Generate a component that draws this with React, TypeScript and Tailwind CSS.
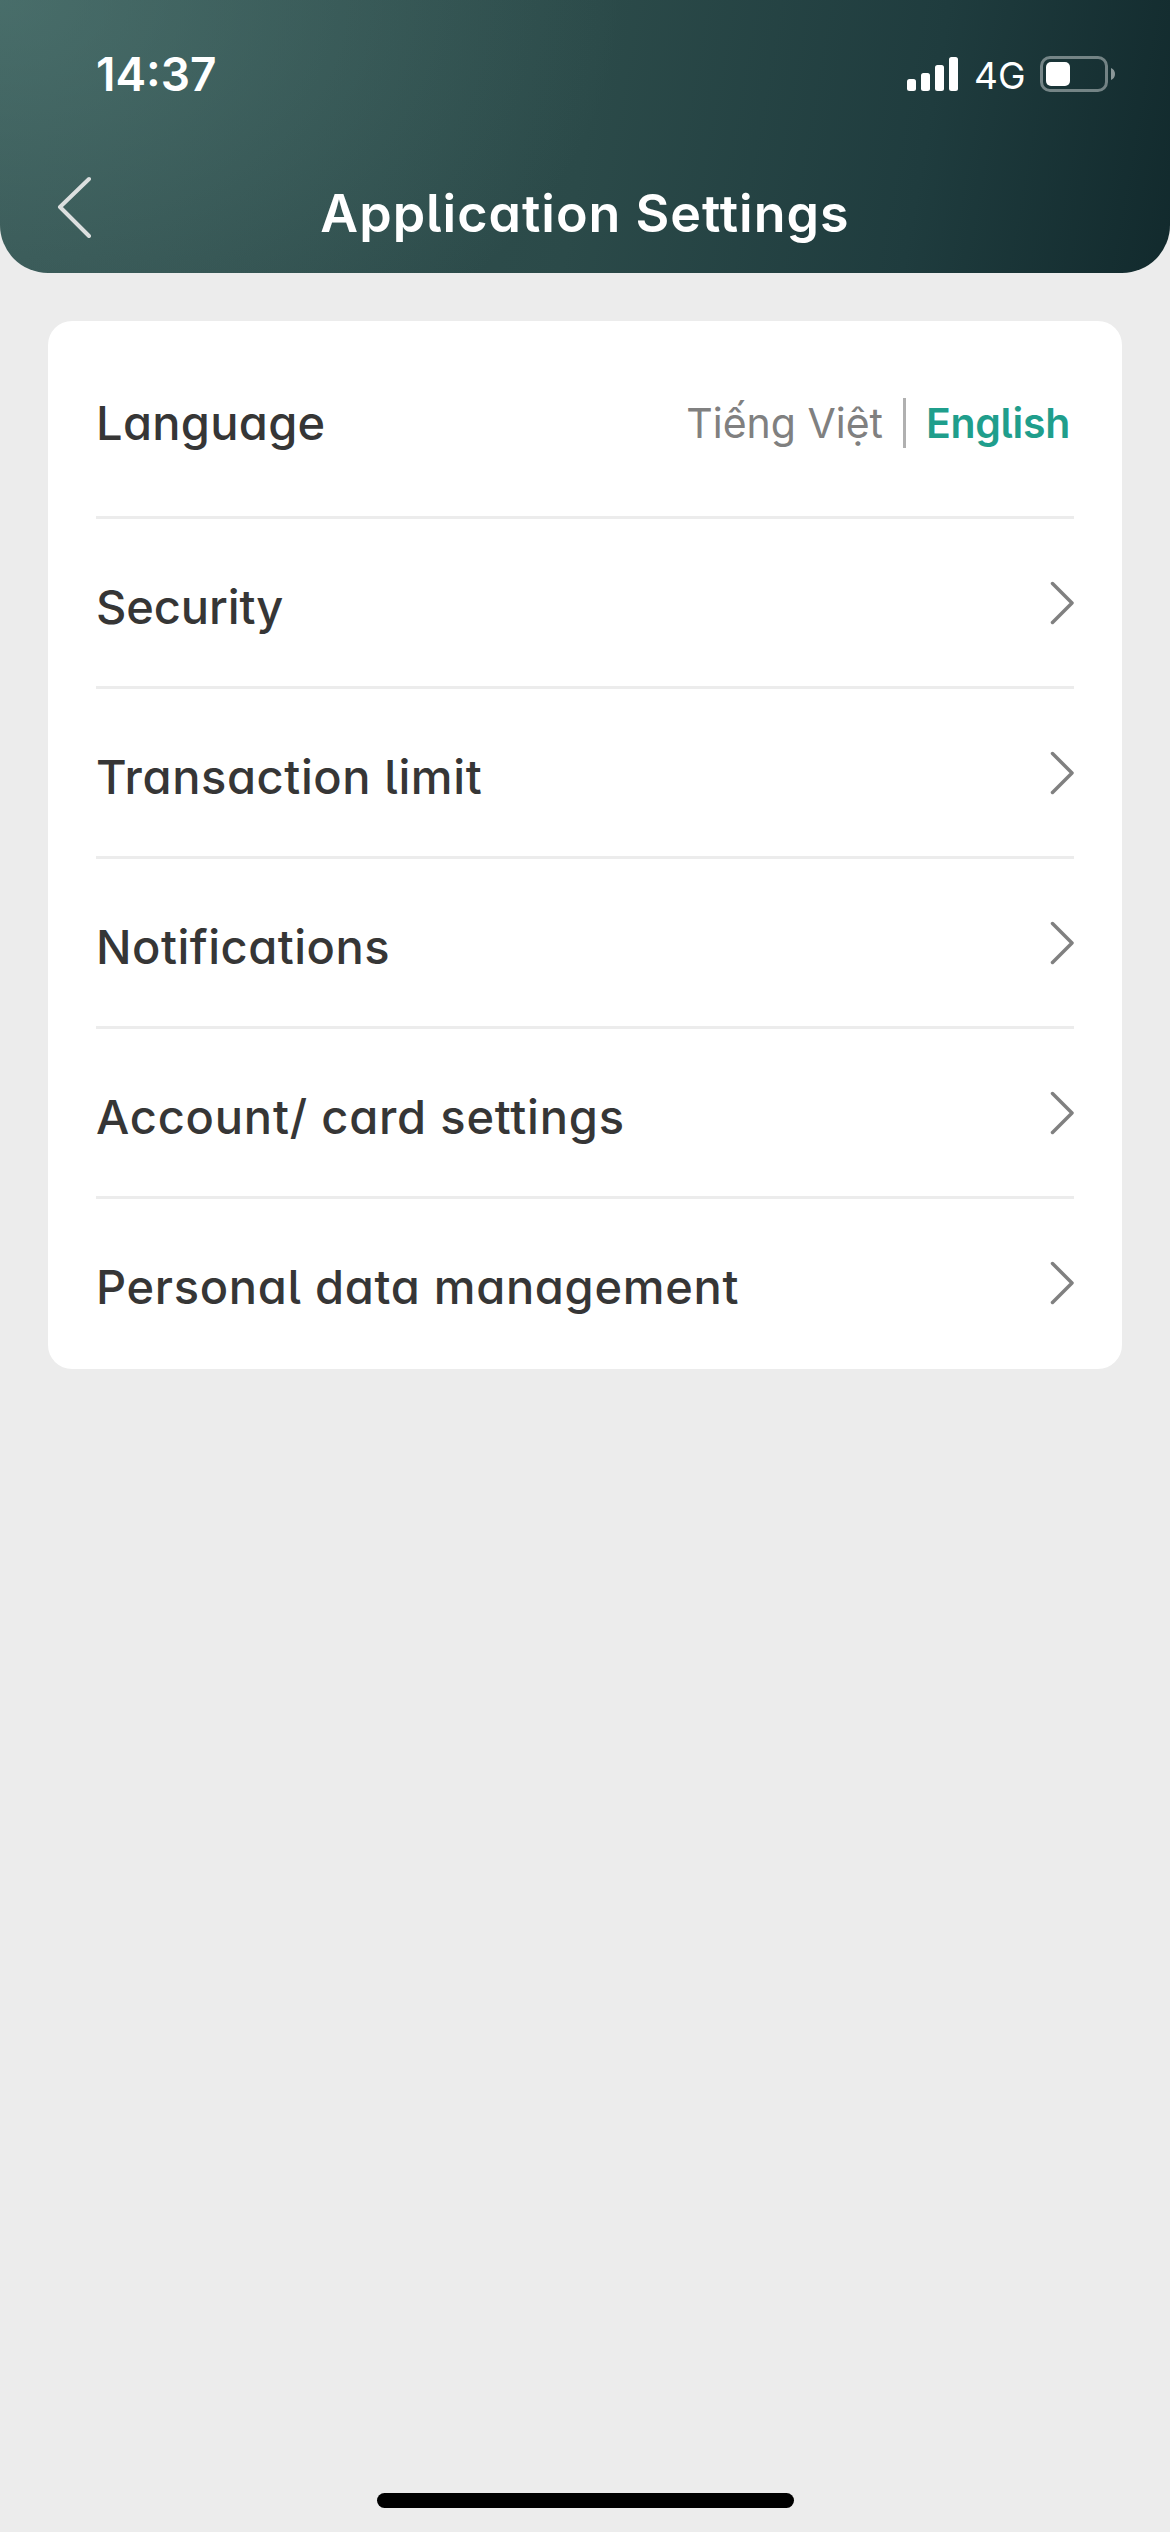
type SettingItem = {
  label: string;
  className: string;
};

const items: SettingItem[] = [
  { label: "Security", className: "tracking-[-0.1px]" },
  { label: "Transaction limit", className: "tracking-[0.6px]" },
  { label: "Notifications", className: "tracking-[0.5px]" },
  { label: "Account/ card settings", className: "tracking-[0.8px]" },
  { label: "Personal data management", className: "tracking-[0.7px]" },
];

function StatusBar() {
  return (
    <div className="flex h-[148px] items-start justify-between pr-[55px] pl-24">
      <span className="mt-[51px] text-[46px] leading-none font-semibold">14:37</span>
      <div className="mt-[56px] flex h-9 items-center">
        <svg className="h-9 w-[51px]" viewBox="0 0 51 36" fill="currentColor">
          <rect x="0" y="23" width="9" height="12" rx="2.5" />
          <rect x="14" y="17" width="9" height="18" rx="2.5" />
          <rect x="28" y="9" width="9" height="26" rx="2.5" />
          <rect x="42" y="1" width="9" height="34" rx="2.5" />
        </svg>
        <span className="mt-0.5 ml-4 w-[66px] text-[37px] leading-none">4G</span>
        <svg className="h-9 w-[75px]" viewBox="0 0 75 36" fill="none">
          <rect x="1.5" y="1.5" width="65" height="33" rx="8.5" stroke="white" strokeOpacity="0.4" strokeWidth="3" />
          <rect x="6" y="6" width="24" height="24" rx="5" fill="white" />
          <path d="M71 12c2.500 1 4 3.300 4 6s-1.500 5-4 6z" fill="white" fillOpacity="0.5" />
        </svg>
      </div>
    </div>
  );
}

function Header() {
  return (
    <header className="h-[273px] rounded-b-[48px] bg-[radial-gradient(ellipse_620px_430px_at_0_0,rgba(92,136,130,0.5),transparent),linear-gradient(100deg,#355352_0%,#2b4a49_50%,#1f3c3e_78%,#122a2d_100%)] text-white">
      <StatusBar />
      <div className="flex h-[125px] items-start justify-between px-14">
        <svg className="mt-7 h-[62px] w-9" viewBox="0 0 36 62" fill="none">
          <path d="M33 3L4 31L33 60" stroke="#dcdfdf" strokeWidth="4" strokeLinecap="round" strokeLinejoin="round" />
        </svg>
        <h1 className="mt-10 text-[52px] leading-none font-semibold tracking-[1px] whitespace-nowrap">
          Application Settings
        </h1>
        <div className="w-9" />
      </div>
    </header>
  );
}

function LanguageRow() {
  return (
    <div className="flex h-[198px] items-start justify-between border-b-[3px] border-[#ececec]">
      <span className="mt-[78px] text-[47px] leading-none font-medium tracking-[0.3px]">Language</span>
      <div className="mt-[77px] mr-1 flex h-[50px] items-center text-[41px]">
        <span className="leading-none text-[#808080]">Tiếng Việt</span>
        <span className="mx-5 h-[50px] w-[3px] bg-[#b0b0b0]" />
        <span className="leading-none font-semibold tracking-[-0.3px] text-[#1f9e8c]">English</span>
      </div>
    </div>
  );
}

function SettingRow({ label, className }: SettingItem) {
  return (
    <div className="flex h-[170px] items-center justify-between border-b-[3px] border-[#ececec] last:border-transparent">
      <span className={`pt-[7px] text-[47px] leading-none font-medium whitespace-nowrap ${className}`}>{label}</span>
      <svg className="h-[44px] w-6" viewBox="0 0 24 44" fill="none">
        <path d="M2.500 2.500L22 22L2.500 41.500" stroke="#808080" strokeWidth="3.500" strokeLinecap="round" strokeLinejoin="round" />
      </svg>
    </div>
  );
}

export default function App() {
  return (
    <div className="flex h-[2532px] w-[1170px] flex-col bg-[#ececec] font-['Inter',sans-serif] [font-feature-settings:'cv05','cv11']">
      <Header />
      <main className="mx-12 mt-12 rounded-3xl bg-white px-12 text-[#363636]">
        <LanguageRow />
        {items.map((item) => (
          <SettingRow key={item.label} {...item} />
        ))}
      </main>
      <div className="mx-auto mt-auto mb-[24px] h-[15px] w-[417px] rounded-full bg-black" />
    </div>
  );
}
